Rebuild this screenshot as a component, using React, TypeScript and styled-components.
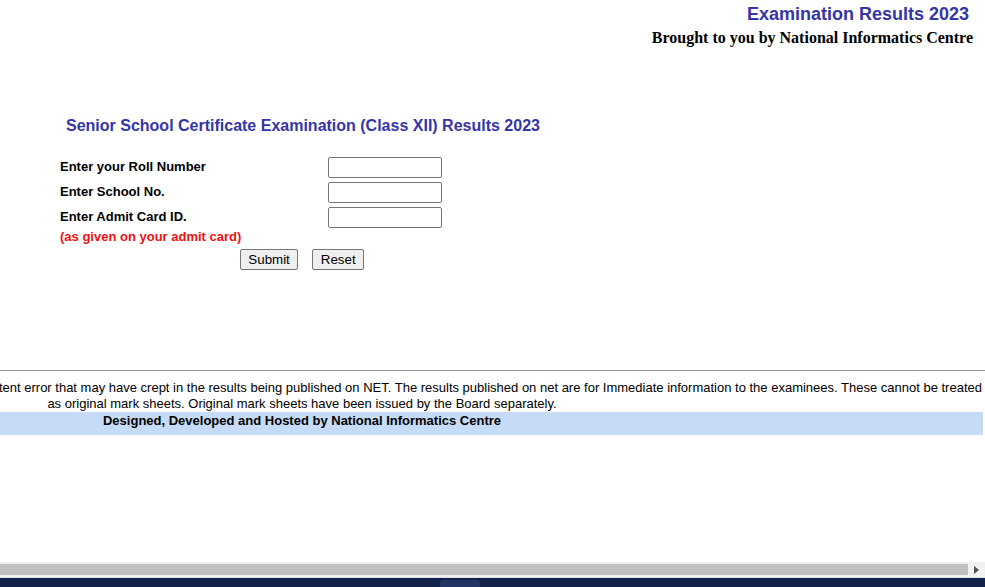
import React from "react";
import styled, { createGlobalStyle } from "styled-components";

const Global = createGlobalStyle`
  html, body { margin: 0; padding: 0; background: #fff; }
  body { font-family: "Liberation Sans", Arial, sans-serif; color: #000; }
  * { box-sizing: border-box; }
`;

const Page = styled.div`
  height: 100vh;
  display: flex;
  flex-direction: column;
  overflow: hidden;
`;

const Header = styled.header`
  display: flex;
  flex-direction: column;
  align-items: flex-end;
  padding: 4px 12px 0 0;
`;

const SiteTitle = styled.div`
  font-size: 18px;
  line-height: 21px;
  font-weight: bold;
  color: #3535a8;
  padding-right: 4px;
`;

const Byline = styled.div`
  margin-top: 4px;
  font-family: "Liberation Serif", "Times New Roman", serif;
  font-size: 16px;
  line-height: 18px;
  font-weight: bold;
`;

const Column = styled.main`
  width: 604px;
  display: flex;
  flex-direction: column;
`;

const Heading = styled.h1`
  margin: 70px 0 0 66px;
  font-size: 16px;
  line-height: 18px;
  font-weight: bold;
  color: #3535a8;
`;

const FormGrid = styled.form`
  margin: 22px 0 0 60px;
  display: grid;
  grid-template-columns: 268px 114px;
  grid-auto-rows: 21px;
  row-gap: 4px;
  align-items: center;
`;

const Label = styled.label`
  font-size: 13px;
  font-weight: bold;
  margin-top: -3px;
`;

const TextBox = styled.input`
  width: 114px;
  height: 21px;
  border: 1px solid #767676;
  border-radius: 2px;
  padding: 1px 2px;
  font: 13px "Liberation Sans", Arial, sans-serif;
  background: #fff;
`;

const Note = styled.div`
  margin: 1px 0 0 60px;
  font-size: 13px;
  line-height: 15px;
  font-weight: bold;
  color: #ee1111;
`;

const Buttons = styled.div`
  margin-top: 5px;
  display: flex;
  justify-content: center;
  gap: 14px;
`;

const Button = styled.button`
  height: 21px;
  padding: 1px 7.5px;
  border: 1px solid #767676;
  border-radius: 2px;
  background: #efefef;
  font: 13.33px "Liberation Sans", Arial, sans-serif;
  color: #000;
`;

const Rule = styled.hr`
  margin: 100px 0 0;
  border: 0;
  border-top: 1px solid #9a9a9a;
  height: 0;
  width: 100%;
`;

const Disclaimer = styled.div`
  width: 604px;
  margin-top: 9px;
  font-size: 13px;
  line-height: 16px;
`;

const Line = styled.div<{ $indent?: number }>`
  display: flex;
  justify-content: center;
  white-space: nowrap;
  padding-left: ${(p) => p.$indent ?? 0}px;
`;

const Band = styled.footer`
  margin-top: 0;
  width: 983px;
  height: 23px;
  background: #c5dbf7;
  padding-top: 1px;
`;

const BandText = styled.div`
  width: 604px;
  text-align: center;
  font-size: 13px;
  line-height: 16px;
  font-weight: bold;
`;

const Spacer = styled.div`
  flex: 1;
`;

const ScrollBar = styled.div`
  height: 15px;
  background: #f1f1f1;
  display: flex;
  align-items: center;
`;

const Thumb = styled.div`
  flex: 1;
  height: 11px;
  background: #c1c1c1;
`;

const Arrow = styled.div`
  width: 17px;
  display: flex;
  justify-content: center;
  align-items: center;
`;

const Taskbar = styled.div`
  height: 10px;
  background: #13224a;
  border-top: 1px solid #dfe3ea;
  display: flex;
  justify-content: center;
  padding-right: 66px;
`;

const TaskTab = styled.div`
  margin-top: 2px;
  width: 40px;
  height: 8px;
  border-radius: 3px 3px 0 0;
  background: #223463;
`;

export default function App() {
  return (
    <>
      <Global />
      <Page>
        <Header>
          <SiteTitle>Examination Results 2023</SiteTitle>
          <Byline>Brought to you by National Informatics Centre</Byline>
        </Header>
        <Column>
          <Heading>Senior School Certificate Examination (Class XII) Results 2023</Heading>
          <FormGrid onSubmit={(e) => e.preventDefault()}>
            <Label htmlFor="roll">Enter your Roll Number</Label>
            <TextBox id="roll" type="text" />
            <Label htmlFor="sch">Enter School No.</Label>
            <TextBox id="sch" type="text" />
            <Label htmlFor="adm">Enter Admit Card ID.</Label>
            <TextBox id="adm" type="text" />
          </FormGrid>
          <Note>(as given on your admit card)</Note>
          <Buttons>
            <Button type="button">Submit</Button>
            <Button type="button">Reset</Button>
          </Buttons>
        </Column>
        <Rule />
        <Disclaimer>
          <Line $indent={7}>
            Disclaimer: Neither NIC nor CBSE is responsible for any inadvertent error that may have crept in the results being published on NET. The results published on net are for Immediate information to the examinees. These cannot be treated
          </Line>
          <Line>as original mark sheets. Original mark sheets have been issued by the Board separately.</Line>
        </Disclaimer>
        <Band>
          <BandText>Designed, Developed and Hosted by National Informatics Centre</BandText>
        </Band>
        <Spacer />
        <ScrollBar>
          <Thumb />
          <Arrow>
            <svg width="5" height="8" viewBox="0 0 5 8">
              <path d="M0 0 L5 4 L0 8 Z" fill="#505050" />
            </svg>
          </Arrow>
        </ScrollBar>
        <Taskbar>
          <TaskTab />
        </Taskbar>
      </Page>
    </>
  );
}
